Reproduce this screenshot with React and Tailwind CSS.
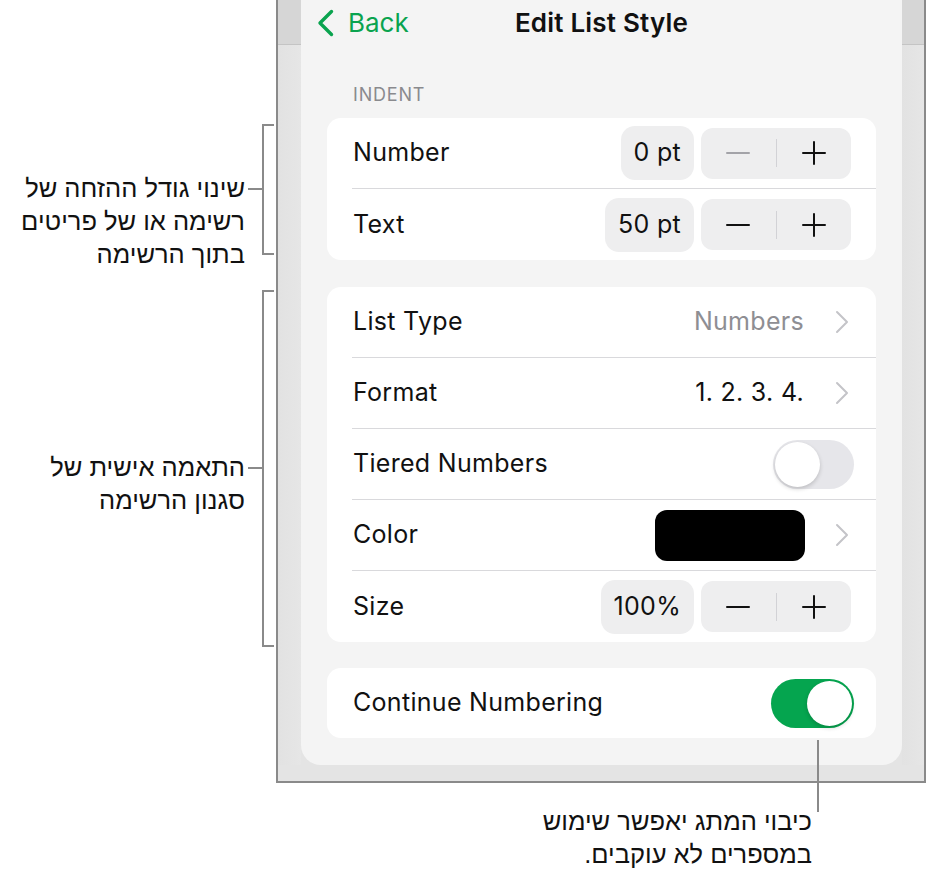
import React from "react";

const UI = "font-['Inter','Liberation_Sans',sans-serif]";
const HE = "font-['Liberation_Sans','DejaVu_Sans',sans-serif]";

function Minus({ dim }) {
  return (
    <svg width="24" height="24" viewBox="0 0 24 24">
      <path d="M1 12H23" stroke={dim ? "#a3a3a8" : "#111"} strokeWidth="2" strokeLinecap="round" />
    </svg>
  );
}
function Plus() {
  return (
    <svg width="24" height="24" viewBox="0 0 24 24">
      <path d="M1 12H23M12 1V23" stroke="#111" strokeWidth="2" strokeLinecap="round" />
    </svg>
  );
}
function Chevron() {
  return (
    <svg width="14" height="24" viewBox="0 0 14 24" className="shrink-0">
      <path d="M2 2L12 12L2 22" fill="none" stroke="#c4c4c8" strokeWidth="2" strokeLinecap="round" strokeLinejoin="round" />
    </svg>
  );
}

function Stepper({ dimMinus }) {
  return (
    <div className="flex items-center w-[150px] h-[51px] rounded-[12px] bg-[#eeeeef]">
      <div className="flex-1 flex justify-center">
        <Minus dim={dimMinus} />
      </div>
      <div className="w-px h-[28px] bg-[#d2d2d6]" />
      <div className="flex-1 flex justify-center">
        <Plus />
      </div>
    </div>
  );
}

function Pill({ children }) {
  return (
    <div className="h-[54px] px-[13px] rounded-[14px] bg-[#eeeeef] flex items-center text-[25px] tracking-[0.3px] text-[#111]">
      {children}
    </div>
  );
}

function Toggle({ on }) {
  return (
    <div
      className={
        on
          ? "w-[83px] h-[49px] rounded-full bg-[#05a54f] p-[2px] flex justify-end"
          : "w-[81px] h-[49px] rounded-full bg-[#e6e6ea] p-[2px] flex justify-start"
      }
    >
      <div className="w-[45px] h-[45px] rounded-full bg-white shadow-[0_2px_4px_rgba(0,0,0,0.18)]" />
    </div>
  );
}

function Row({ label, last, children, pr = "pr-[25px]" }) {
  return (
    <div
      className={
        "ml-[25px] pl-px h-[71px] flex items-center " +
        pr +
        (last ? "" : " border-b border-[#d9d9dc]")
      }
    >
      <div className="flex-1 text-[25px] tracking-[0.3px] text-[#111]">{label}</div>
      {children}
    </div>
  );
}

function Strip() {
  return (
    <div className="flex flex-col h-full">
      <div className="h-[45px] bg-[#d6d6d6] border-b border-[#c4c4c4]" />
      <div className="flex-1 bg-gradient-to-r from-[#e2e2e2] to-[#e6e6e6]" />
    </div>
  );
}

function Bracket({ height, tickTop, lines }) {
  return (
    <div className="flex items-start" style={{ height }}>
      <div
        className={"flex-1 text-right pr-[3px] text-[25.5px] leading-[33px] text-[#111] whitespace-nowrap " + HE}
        dir="rtl"
        style={{ marginTop: tickTop - 16 }}
      >
        {lines.map((l, i) => (
          <div key={i}>{l}</div>
        ))}
      </div>
      <div className="w-[14px] h-[2px] bg-[#8a8a8a]" style={{ marginTop: tickTop }} />
      <div
        className="w-[12px] mr-[2px] border-l-2 border-y-2 border-[#8a8a8a]"
        style={{ height }}
      />
    </div>
  );
}

export default function App() {
  return (
    <div className={"relative w-[926px] h-[870px] bg-white overflow-hidden " + UI}>
      <div className="flex h-[783px]">
        {/* annotations */}
        <div className="w-[276px] flex flex-col pt-[124px] gap-[35px]">
          <Bracket
            height={131}
            tickTop={64}
            lines={["שינוי גודל ההזחה של", "רשימה או של פריטים", "בתוך הרשימה"]}
          />
          <Bracket height={357} tickTop={177} lines={["התאמה אישית של", "סגנון הרשימה"]} />
        </div>

        {/* device frame */}
        <div className="w-[650px] border-l-2 border-r-2 border-b-2 border-[#8a8a8a] bg-[#e4e4e4] flex flex-col">
          <div className="flex h-[765px]">
            <div className="w-[23px]">
              <Strip />
            </div>
            <div className="w-[601px] h-[765px] bg-[#f4f4f4] rounded-b-[20px] flex flex-col">
              {/* header */}
              <div className="grid grid-cols-[1fr_auto_1fr] items-center h-[45px]">
                <div className="flex items-center pl-[16px] gap-[14px]">
                  <svg width="17" height="28" viewBox="0 0 17 28">
                    <path
                      d="M14.5 2.5L3 14L14.5 25.5"
                      fill="none"
                      stroke="#0aa34f"
                      strokeWidth="3.4"
                      strokeLinecap="round"
                      strokeLinejoin="round"
                    />
                  </svg>
                  <span className="text-[26px] text-[#0aa34f]">Back</span>
                </div>
                <div className="text-[26px] font-semibold tracking-[0.2px] text-[#111]">Edit List Style</div>
                <div />
              </div>

              <div className="pl-[52px] mt-[40px] text-[18px] leading-[20px] text-[#8a8a8e] tracking-[0.8px]">
                INDENT
              </div>

              {/* card 1 */}
              <div className="mx-[26px] mt-[13px] bg-white rounded-[14px]">
                <Row label="Number">
                  <div className="flex items-center gap-[7px]">
                    <Pill>0 pt</Pill>
                    <Stepper dimMinus />
                  </div>
                </Row>
                <Row label="Text" last>
                  <div className="flex items-center gap-[7px]">
                    <Pill>50 pt</Pill>
                    <Stepper />
                  </div>
                </Row>
              </div>

              {/* card 2 */}
              <div className="mx-[26px] mt-[27px] bg-white rounded-[14px]">
                <Row label="List Type" pr="pr-[27px]">
                  <div className="flex items-center gap-[31px]">
                    <span className="text-[25px] tracking-[0.3px] text-[#8e8e93]">Numbers</span>
                    <Chevron />
                  </div>
                </Row>
                <Row label="Format" pr="pr-[27px]">
                  <div className="flex items-center gap-[31px]">
                    <span className="text-[25px] tracking-[0.3px] text-[#111]">1. 2. 3. 4.</span>
                    <Chevron />
                  </div>
                </Row>
                <Row label="Tiered Numbers" pr="pr-[22px]">
                  <Toggle />
                </Row>
                <Row label="Color" pr="pr-[27px]">
                  <div className="flex items-center gap-[30px]">
                    <div className="w-[150px] h-[51px] rounded-[12px] bg-black" />
                    <Chevron />
                  </div>
                </Row>
                <Row label="Size" last>
                  <div className="flex items-center gap-[7px]">
                    <Pill>100%</Pill>
                    <Stepper />
                  </div>
                </Row>
              </div>

              {/* card 3 */}
              <div className="mx-[26px] mt-[26px] bg-white rounded-[14px]">
                <div className="ml-[25px] pl-px pr-[22px] h-[70px] flex items-center">
                  <div className="flex-1 text-[25px] tracking-[0.3px] text-[#111]">Continue Numbering</div>
                  <Toggle on />
                </div>
              </div>
            </div>
            <div className="w-[22px]">
              <Strip />
            </div>
          </div>
          <div className="flex-1" />
        </div>
      </div>

      {/* bottom callout */}
      <div
        className={"pr-[114px] pt-[22px] text-right text-[25.5px] leading-[33px] text-[#111] " + HE}
        dir="rtl"
      >
        <div>כיבוי המתג יאפשר שימוש</div>
        <div>במספרים לא עוקבים.</div>
      </div>
      <div className="absolute left-[817px] top-[740px] w-[2px] h-[72px] bg-[#8a8a8a]" />
    </div>
  );
}
